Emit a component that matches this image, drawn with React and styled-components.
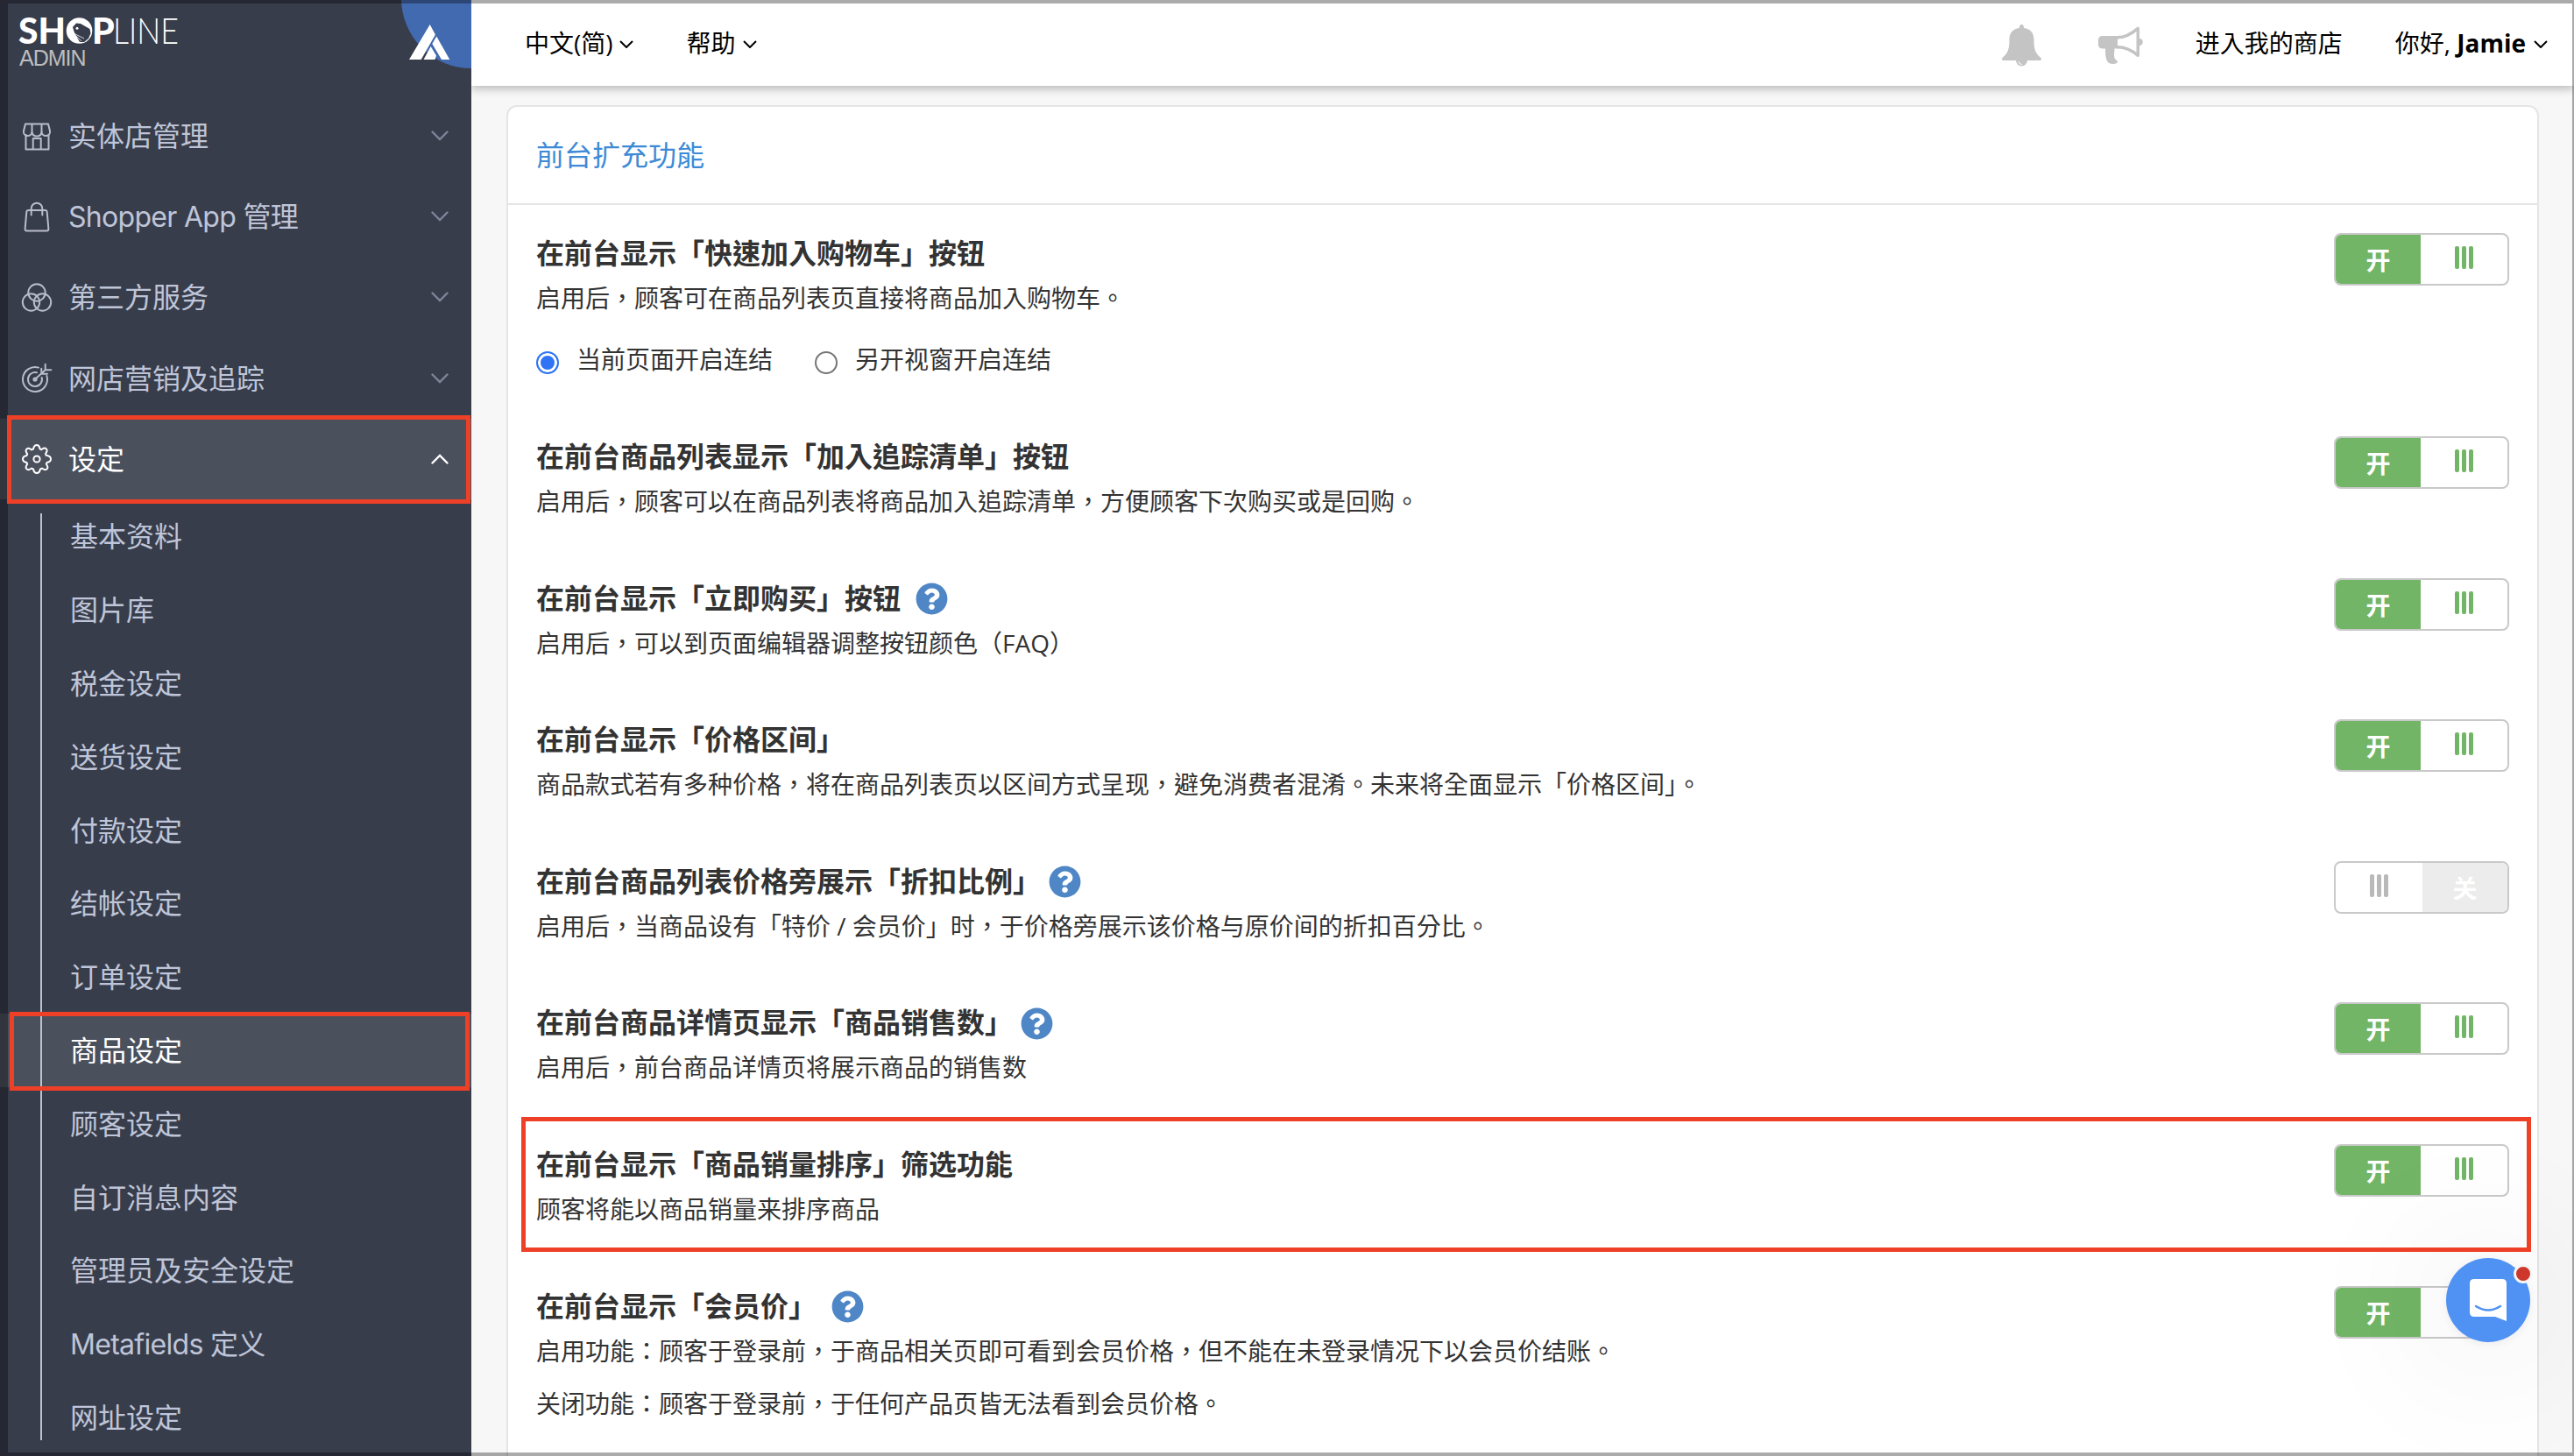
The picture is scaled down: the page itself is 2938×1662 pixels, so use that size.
import styled, { createGlobalStyle } from "styled-components";
import { FaQuestionCircle } from "react-icons/fa";

const GlobalStyle = createGlobalStyle`
  * {
    box-sizing: border-box;
  }
  body {
    margin: 0;
    background: #f7f7f7;
    font-family: "Open Sans", "Noto Sans CJK TC", sans-serif;
  }
`;

const Page = styled.div`
  display: flex;
  position: relative;
  width: 2938px;
  height: 1662px;
  overflow: hidden;
`;

// dimmed edge drawn over the whole window
const WindowEdge = styled.div`
  position: absolute;
  inset: 0;
  border: solid rgba(0, 0, 0, 0.33);
  border-width: 4px 2px 4px 9px;
  pointer-events: none;
`;

const Sidebar = styled.nav`
  position: relative;
  flex: none;
  width: 538px;
  background: #383d4b;
  font-family: Inter, "Noto Sans CJK SC", sans-serif;
  overflow: hidden;
`;

const SidebarHead = styled.div`
  display: flex;
  justify-content: space-between;
  height: 108.5px;
`;

const Brand = styled.div`
  padding: 5px 0 0 20px;

  svg {
    display: block;
    overflow: visible;
  }
`;

const BrandSub = styled.div`
  margin-left: 2px;
  font-family: "Liberation Sans", sans-serif;
  font-size: 25px;
  line-height: 26px;
  letter-spacing: -1px;
  color: #bdbdbf;
`;

const MenuItem = styled.div`
  display: flex;
  align-items: center;
  position: relative;
  height: 92.4px;
  padding: 0 26px 0 25px;
  font-size: 32px;
  line-height: 48px;
  color: ${(props) => (props.$active ? "#ffffff" : "#bfc5d8")};
  background: ${(props) => (props.$active ? "#4b505d" : "transparent")};
`;

const MenuLabel = styled.span`
  padding-top: 2px;
  letter-spacing: ${(props) => (props.$latin ? "-0.7px" : "normal")};
`;

const MenuIcon = styled.svg`
  width: 34px;
  height: 34px;
  margin-right: 19px;
  fill: none;
  stroke: ${(props) => (props.$active ? "#ffffff" : "#b9bdcb")};
  stroke-width: 2;
  stroke-linecap: round;
  stroke-linejoin: round;
  overflow: visible;
`;

const MenuArrow = styled.svg`
  width: 20px;
  height: 12px;
  margin-left: auto;
  fill: none;
  stroke: ${(props) => (props.$active ? "#ffffff" : "#7f8498")};
  stroke-width: 2.4;
  stroke-linecap: round;
`;

const SubMenu = styled.div`
  position: relative;
`;

const SubMenuLine = styled.div`
  position: absolute;
  left: 46px;
  top: 16px;
  width: 2px;
  height: 1058px;
  background: #bfc1cf;
`;

const SubItem = styled(MenuItem)`
  height: 83.8px;
  padding-left: 80px;
`;

const RedBox = styled.div`
  position: absolute;
  top: ${(props) => props.$top}px;
  right: ${(props) => props.$right}px;
  bottom: ${(props) => props.$bottom}px;
  left: ${(props) => props.$left}px;
  border: 5px solid #ee4026;
  z-index: 1;
`;

const Content = styled.div`
  display: flex;
  flex-direction: column;
  flex: 1;
  min-width: 0;
`;

const TopBar = styled.header`
  display: flex;
  align-items: center;
  flex: none;
  height: 98px;
  padding: 0 30px 0 61px;
  font-size: 28px;
  line-height: 40px;
  color: #000000;
  background: #ffffff;
  box-shadow: 0 3px 10px rgba(0, 0, 0, 0.27);
`;

const TopLink = styled.div`
  display: flex;
  align-items: center;
  margin-right: ${(props) => props.$gap || 0}px;
  white-space: pre;
`;

const TopArrow = styled.svg`
  width: 16px;
  height: 9px;
  margin: 3px 0 0 ${(props) => props.$gap}px;
  fill: none;
  stroke: #000000;
  stroke-width: 2;
`;

const TopIcon = styled.svg`
  width: ${(props) => props.$w}px;
  height: 48px;
  margin-right: ${(props) => props.$gap}px;
  margin-top: 6px;
`;

const Spacer = styled.div`
  flex: 1;
`;

const Card = styled.section`
  flex: none;
  width: 2320px;
  height: 1600px;
  margin: 22px 0 0 40px;
  background: #ffffff;
  border: 2px solid #e5e5e5;
  border-radius: 12px;
`;

const CardTitle = styled.h2`
  margin: 0;
  padding: 31px 32px 0;
  height: 112px;
  font-size: 32px;
  line-height: 48px;
  font-weight: 400;
  color: #3d8ad6;
  border-bottom: 2px solid #e5e5e5;
`;

const Row = styled.div`
  display: flex;
  justify-content: space-between;
  align-items: flex-start;
  position: relative;
  height: ${(props) => props.$height || 161.6}px;
  padding: 32px 32px 0;
  color: #333333;
`;

const RowTitle = styled.h3`
  display: flex;
  align-items: center;
  margin: 0 0 2px;
  font-size: 32px;
  line-height: 46px;
  font-weight: 700;
  white-space: pre;

  svg {
    width: 37px;
    height: 37px;
    margin: 2px 0 0 9px;
    color: #4f86c6;
  }
`;

const RowText = styled.p`
  margin: 0 0 8px;
  font-size: 28px;
  line-height: 52px;
`;

const Radios = styled.div`
  display: flex;
  align-items: center;
  font-size: 28px;
  line-height: 40px;
  margin-top: 24px;
`;

const Radio = styled.span`
  width: 26px;
  height: 26px;
  margin: 7px 20px 0 0;
  border: 2px solid ${(props) => (props.$checked ? "#2f74f5" : "#767676")};
  border-radius: 50%;
  background: ${(props) => (props.$checked ? "#2f74f5" : "#ffffff")};
  box-shadow: inset 0 0 0 ${(props) => (props.$checked ? 3 : 0)}px #ffffff;
`;

const RadioLabel = styled.label`
  display: flex;
  align-items: center;
  margin-right: 48px;
`;

const Switch = styled.div`
  display: flex;
  width: 200px;
  height: 60px;
  border: 2px solid #c9c9c9;
  border-radius: 8px;
  background: #ffffff;
  overflow: hidden;
`;

const SwitchSide = styled.div`
  display: flex;
  align-items: center;
  justify-content: center;
  width: ${(props) => props.$width}px;
  font-family: "Noto Sans CJK SC", sans-serif;
  font-size: 28px;
  line-height: 40px;
  font-weight: 700;
  color: #ffffff;
  background: ${(props) => props.$bg};
`;

const Grip = styled.div`
  display: flex;
  gap: 3px;
  margin-top: -4px;

  i {
    width: 5px;
    height: 26px;
    border-radius: 2px;
    background: ${(props) => props.$color};
  }
`;

const ChatButton = styled.div`
  position: absolute;
  left: 2792px;
  top: 1436px;
  display: flex;
  width: 96px;
  height: 96px;
  border-radius: 50%;
  background: #4f92f4;
  box-shadow: 0 2px 12px rgba(0, 0, 0, 0.06), 0 4px 180px rgba(0, 0, 0, 0.16);

  svg {
    margin: 24px 0 0 27px;
  }
`;

const ChatDot = styled.span`
  position: absolute;
  right: -3px;
  top: 7px;
  width: 22px;
  height: 22px;
  border: 3px solid #f6f6f6;
  border-radius: 50%;
  background: #cd372c;
`;

const icons = {
  store: (
    <>
      <path d="M4 3.500h26l2 8a4.800 4.800 0 0 1-9.500 1.500a5.600 5.600 0 0 1-11 0a4.800 4.800 0 0 1-9.500-1.500z" />
      <path d="M11.500 4v9M22.500 4v9M4.500 16v16.500h26V16M12.700 32V20h9v12" />
    </>
  ),
  bag: (
    <path d="M7.500 10h19q2 0 2.200 2l1.700 19.500q0 2-2 2H5.600q-2 0-2-2L5.300 12q.200-2 2.200-2zM10.700 15.500V8a6.300 6.300 0 0 1 12.600 0v7.500" />
  ),
  circles: (
    <>
      <circle cx="17" cy="12" r="9.700" />
      <circle cx="10.500" cy="23" r="9.700" />
      <circle cx="23.500" cy="23" r="9.700" />
    </>
  ),
  target: (
    <>
      <path d="M19 4.600A14 14 0 1 0 28.400 14M17 10.300A8 8 0 1 0 22.700 16" />
      <path d="M15 18L26.700 7.300M26.700.700v6.600h6.600M22.300 5.700v6h6.700" />
      <circle cx="15" cy="18" r="1.600" />
    </>
  ),
  gear: (
    <>
      <path d="M17 1c3 0 3 2 3.600 4.500l1.600.700c2-1.300 3.600-2.800 5.600-.800s.500 3.600-.800 5.600l.700 1.800C31 13.500 33 14 33 17s-2 3.500-4.500 4l-.700 1.800c1.300 2 2.800 3.600.800 5.600s-3.600.500-5.600-.800l-2 .900C20.500 31 20 33 17 33s-3.500-2-4-4.500l-2-.900c-2 1.300-3.600 2.800-5.600.800s-.500-3.600.800-5.600L5.500 21C3 20.500 1 20 1 17s2-3.500 4.500-4l.700-1.800c-1.300-2-2.800-3.600-.800-5.600s3.600-.500 5.600.800l2-.900C13.500 3 14 1 17 1z" />
      <circle cx="17" cy="17" r="3.600" />
    </>
  ),
};

const menu = [
  { icon: "store", label: "实体店管理" },
  { icon: "bag", label: "Shopper App 管理", latin: true },
  { icon: "circles", label: "第三方服务" },
  { icon: "target", label: "网店营销及追踪" },
  { icon: "gear", label: "设定", active: true },
];

const subMenu = [
  { label: "基本资料" },
  { label: "图片库" },
  { label: "税金设定" },
  { label: "送货设定" },
  { label: "付款设定" },
  { label: "结帐设定" },
  { label: "订单设定" },
  { label: "商品设定", active: true },
  { label: "顾客设定" },
  { label: "自订消息内容" },
  { label: "管理员及安全设定" },
  { label: "Metafields 定义", latin: true },
  { label: "网址设定" },
];

const settings = [
  {
    title: "在前台显示「快速加入购物车」按钮",
    text: ["启用后，顾客可在商品列表页直接将商品加入购物车。"],
    radios: ["当前页面开启连结", "另开视窗开启连结"],
    height: 232,
    on: true,
  },
  {
    title: "在前台商品列表显示「加入追踪清单」按钮",
    text: ["启用后，顾客可以在商品列表将商品加入追踪清单，方便顾客下次购买或是回购。"],
    on: true,
  },
  {
    title: "在前台显示「立即购买」按钮 ",
    text: ["启用后，可以到页面编辑器调整按钮颜色（FAQ）"],
    help: true,
    on: true,
  },
  {
    title: "在前台显示「价格区间」",
    text: [
      "商品款式若有多种价格，将在商品列表页以区间方式呈现，避免消费者混淆。未来将全面显示「价格区间」。",
    ],
    on: true,
  },
  {
    title: "在前台商品列表价格旁展示「折扣比例」",
    text: ["启用后，当商品设有「特价 / 会员价」时，于价格旁展示该价格与原价间的折扣百分比。"],
    help: true,
    on: false,
  },
  {
    title: "在前台商品详情页显示「商品销售数」",
    text: ["启用后，前台商品详情页将展示商品的销售数"],
    help: true,
    on: true,
  },
  {
    title: "在前台显示「商品销量排序」筛选功能",
    text: ["顾客将能以商品销量来排序商品"],
    marked: true,
    on: true,
  },
  {
    title: "在前台显示「会员价」 ",
    text: [
      "启用功能：顾客于登录前，于商品相关页即可看到会员价格，但不能在未登录情况下以会员价结账。",
      "关闭功能：顾客于登录前，于任何产品页皆无法看到会员价格。",
    ],
    help: true,
    on: true,
  },
];

function Logo() {
  return (
    <svg width="190" height="48" viewBox="20 5 190 48" fill="#ffffff">
      <g fontFamily="Lato, sans-serif" fontSize="41" fontWeight="900">
        <text x="21" y="49.500" textLength="54" lengthAdjust="spacingAndGlyphs">
          SH
        </text>
        <text x="105" y="49.500">
          P
        </text>
      </g>
      <text
        x="129"
        y="49.500"
        fontFamily="Lato, sans-serif"
        fontSize="41"
        fontWeight="300"
        textLength="75"
        lengthAdjust="spacingAndGlyphs"
      >
        LINE
      </text>
      <circle cx="90.500" cy="35" r="14.800" />
      <path
        d="M83 31L87 26.500L92 27L102.500 33L103.500 38L101 44L96 48H91L87 41L84.500 36z"
        fill="#383d4b"
      />
      <circle cx="88" cy="32.300" r="1.500" />
      <path d="M86 39l10 5M87 41l6 6" stroke="#ffffff" strokeWidth="0.800" />
    </svg>
  );
}

function Corner() {
  return (
    <svg width="80" height="80" viewBox="458 0 80 80">
      <circle cx="538" cy="-2" r="80" fill="#426ab0" />
      <path d="M490.700 28L496.900 39.500L480.700 68H467z" fill="#ffffff" />
      <path d="M498.300 41.500L513.300 68H504L493.300 50z" fill="#ffffff" />
      <path d="M491.700 53L498 63.500L496.500 68H483.500z" fill="#ffffff" />
    </svg>
  );
}

function Toggle({ on }) {
  return on ? (
    <Switch>
      <SwitchSide $width={97} $bg="#72b566">
        开
      </SwitchSide>
      <SwitchSide $width={99}>
        <Grip $color="#72b566">
          <i />
          <i />
          <i />
        </Grip>
      </SwitchSide>
    </Switch>
  ) : (
    <Switch>
      <SwitchSide $width={99}>
        <Grip $color="#b9b9b9">
          <i />
          <i />
          <i />
        </Grip>
      </SwitchSide>
      <SwitchSide $width={97} $bg="#ececec">
        关
      </SwitchSide>
    </Switch>
  );
}

function Down({ gap }) {
  return (
    <TopArrow $gap={gap} viewBox="0 0 16 9">
      <path d="M1 1l7 7 7-7" />
    </TopArrow>
  );
}

function App() {
  return (
    <Page>
      <GlobalStyle />
      <Sidebar>
        <SidebarHead>
          <Brand>
            <Logo />
            <BrandSub>ADMIN</BrandSub>
          </Brand>
          <Corner />
        </SidebarHead>
        {menu.map((item) => (
          <MenuItem key={item.label} $active={item.active}>
            <MenuIcon $active={item.active} viewBox="0 0 34 34">
              {icons[item.icon]}
            </MenuIcon>
            <MenuLabel $latin={item.latin}>{item.label}</MenuLabel>
            <MenuArrow $active={item.active} viewBox="0 0 20 12">
              <path d={item.active ? "M1.500 10.500L10 2l8.500 8.500" : "M1.500 1.500L10 10l8.500-8.500"} />
            </MenuArrow>
            {item.active && <RedBox $top={-4} $right={1} $bottom={-5} $left={8} />}
          </MenuItem>
        ))}
        <SubMenu>
          {subMenu.map((item) => (
            <SubItem key={item.label} $active={item.active}>
              <MenuLabel $latin={item.latin}>{item.label}</MenuLabel>
              {item.active && <RedBox $top={-2} $right={2} $bottom={-4} $left={11} />}
            </SubItem>
          ))}
          <SubMenuLine />
        </SubMenu>
      </Sidebar>

      <Content>
        <TopBar>
          <TopLink $gap={61}>
            中文(简)
            <Down gap={7} />
          </TopLink>
          <TopLink>
            帮助
            <Down gap={8} />
          </TopLink>
          <Spacer />
          <TopIcon $w={45} $gap={65} viewBox="0 0 45 48" fill="#c4c4c4">
            <path d="M22.500 0c2 0 2.500 2 2.600 4C33 5 36.500 10 36.500 17c0 12 2 16 8 21 1 1 .500 3-1 3h-42c-1.500 0-2-2-1-3 6-5 8-9 8-21 0-7 3.500-12 11.400-13 .100-2 .600-4 2.600-4z" />
            <path d="M16 41a6.500 6.500 0 0 0 13 0z" />
            <path d="M19 42a4 4 0 0 0 4 3.500" fill="none" stroke="#ffffff" />
          </TopIcon>
          <TopIcon $w={51} $gap={60} viewBox="0 0 51 48" fill="#c4c4c4">
            <path d="M5 13h17v14.500H5q-5 0-5-5v-4.500q0-5 5-5zM8 27h10.500c0 4-1 8 0 11s3.500 3 3.500 4.500-2 2.500-5 2.500c-7 0-9-4-9-18z" />
            <path d="M22 14.800c10 0 18-6 23.300-10.500v31c-6-5-13-9.500-23.300-9.500" fill="none" stroke="#c4c4c4" strokeWidth="3.500" strokeLinejoin="round" />
            <path d="M47 16c5 0 5 8 0 8z" />
          </TopIcon>
          <TopLink $gap={60}>进入我的商店</TopLink>
          <TopLink>
            你好, <b>Jamie</b>
            <Down gap={9} />
          </TopLink>
        </TopBar>

        <Card>
          <CardTitle>前台扩充功能</CardTitle>
          {settings.map((item) => (
            <Row key={item.title} $height={item.height}>
              {item.marked && <RedBox $top={1} $right={7} $bottom={7} $left={15} />}
              <div>
                <RowTitle>
                  {item.title}
                  {item.help && <FaQuestionCircle />}
                </RowTitle>
                {item.text.map((line) => (
                  <RowText key={line}>{line}</RowText>
                ))}
                {item.radios && (
                  <Radios>
                    {item.radios.map((label, i) => (
                      <RadioLabel key={label}>
                        <Radio $checked={i === 0} />
                        {label}
                      </RadioLabel>
                    ))}
                  </Radios>
                )}
              </div>
              <Toggle on={item.on} />
            </Row>
          ))}
        </Card>
      </Content>

      <ChatButton>
        <svg width="42" height="48" viewBox="0 0 42 48">
          <path d="M5 0h32q5 0 5 5v43l-13-5H5q-5 0-5-5V5q0-5 5-5z" fill="#ffffff" />
          <path d="M7 31q14 9 28 0" fill="none" stroke="#4f92f4" strokeWidth="2.500" strokeLinecap="round" />
        </svg>
        <ChatDot />
      </ChatButton>
      <WindowEdge />
    </Page>
  );
}

export default App;
